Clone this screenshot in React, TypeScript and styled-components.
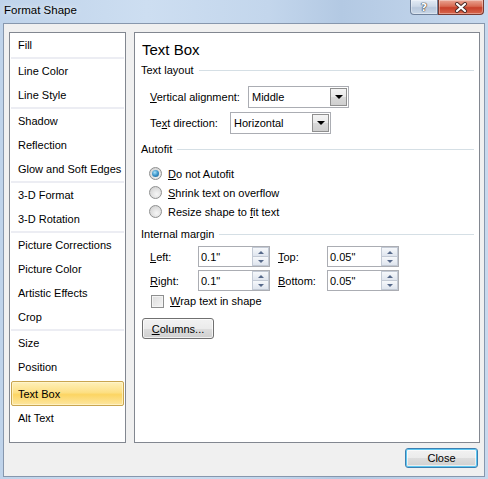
import React from "react";
import styled, { createGlobalStyle } from "styled-components";

const GlobalStyle = createGlobalStyle`
  html, body { margin: 0; padding: 0; }
  body {
    width: 488px;
    height: 479px;
    overflow: hidden;
    font-family: "Liberation Sans", Arial, sans-serif;
    font-size: 11px;
    color: #000;
  }
`;

// window chrome
const Window = styled.div`
  width: 488px;
  height: 479px;
  display: flex;
  flex-direction: column;
  background: linear-gradient(to right, #bfd3ea 0%, #cddef1 30%, #c3d6ec 55%, #b3c9e3 70%, #c7d9ee 100%);
`;

const TitleBar = styled.div`
  height: 23px;
  flex-shrink: 0;
  display: flex;
  align-items: flex-start;
`;

const Title = styled.div`
  flex: 1;
  padding: 3px 0 0 4px;
  font-size: 11.5px;
  line-height: 14px;
  text-shadow: 0 0 6px rgba(255, 255, 255, 0.9);
`;

const CaptionButtons = styled.div`
  display: flex;
  margin-right: 4px;
`;

const CaptionButton = styled.div<{ $close?: boolean }>`
  width: ${(p) => (p.$close ? 46 : 28)}px;
  height: 15px;
  box-sizing: border-box;
  display: flex;
  align-items: center;
  justify-content: center;
  border: 1px solid ${(p) => (p.$close ? "#7b3a30" : "#6f819b")};
  border-top: none;
  border-radius: ${(p) => (p.$close ? "0 0 4px 0" : "0 0 0 4px")};
  background: ${(p) =>
    p.$close
      ? "linear-gradient(#e9a594 0%, #d86a52 45%, #c7402a 55%, #d8674d 100%)"
      : "linear-gradient(#e3ebf5 0%, #ccd8e7 45%, #b8c8dc 55%, #c9d7e8 100%)"};
  box-shadow: inset 0 0 0 1px rgba(255, 255, 255, 0.35);
`;

const HelpGlyph = styled.span`
  font-family: "DejaVu Sans", sans-serif;
  font-weight: bold;
  font-size: 11px;
  line-height: 11px;
  color: #fff;
  text-shadow: 0 0 1px #333, 0 0 1px #333, 0 0 1px #333;
`;

const Client = styled.div`
  flex: 1;
  margin: 0 3px 2px 3px;
  border: 1px solid #8797ad;
  background: #f0f0f0;
  padding: 8px 4px 0 5px;
  display: flex;
  flex-direction: column;
`;

const Body = styled.div`
  height: 411px;
  display: flex;
  gap: 8px;
`;

// left category list
const CategoryList = styled.div`
  width: 117px;
  box-sizing: border-box;
  border: 1px solid #828790;
  background: #fff;
  display: flex;
  flex-direction: column;
`;

const Category = styled.div<{ $selected?: boolean }>`
  height: ${(p) => (p.$selected ? 25 : 24)}px;
  margin-top: ${(p) => (p.$selected ? 2 : 0)}px;
  box-sizing: border-box;
  margin-left: 1px;
  margin-right: 1px;
  padding-left: 6px;
  display: flex;
  align-items: center;
  border: 1px solid ${(p) => (p.$selected ? "#c9a54f" : "transparent")};
  border-radius: 2px;
  background: ${(p) =>
    p.$selected
      ? "linear-gradient(#fef0ba 0%, #fde085 45%, #fcd563 55%, #fde6a0 100%)"
      : "transparent"};
  box-shadow: ${(p) => (p.$selected ? "inset 0 0 0 1px rgba(255,246,210,0.7)" : "none")};
`;

const CategorySep = styled.div`
  height: 2px;
  margin: 0 1px;
  background: #ecedf3;
`;

// right panel
const Panel = styled.div`
  width: 346px;
  box-sizing: border-box;
  border: 1px solid #828790;
  background: #fff;
  padding: 7px 5px 0 6px;
  display: flex;
  flex-direction: column;
`;

const Heading = styled.div`
  height: 20px;
  line-height: 20px;
  margin-left: 1px;
  font-size: 15px;
`;

const SectionHeader = styled.div<{ $mt: number }>`
  height: 16px;
  margin-top: ${(p) => p.$mt}px;
  display: flex;
  align-items: center;
  gap: 5px;
  &::after {
    content: "";
    flex: 1;
    height: 1px;
    background: #d5dfe5;
  }
`;

const FieldRow = styled.div<{ $mt: number }>`
  margin-top: ${(p) => p.$mt}px;
  padding-left: 9px;
  display: flex;
  align-items: center;
`;

const FieldLabel = styled.div<{ $w: number }>`
  width: ${(p) => p.$w}px;
`;

const Combo = styled.div`
  width: 101px;
  height: 22px;
  box-sizing: border-box;
  border: 1px solid #abadb3;
  background: #fff;
  padding: 1px 1px 1px 3px;
  display: flex;
  align-items: center;
  justify-content: space-between;
`;

const ComboArrow = styled.div`
  width: 17px;
  height: 18px;
  box-sizing: border-box;
  border: 1px solid #8f8f8f;
  background: linear-gradient(#f4f4f4 0%, #e9e9e9 50%, #d9d9d9 51%, #cfcfcf 100%);
  display: flex;
  align-items: center;
  justify-content: center;
  &::after {
    content: "";
    border-left: 4px solid transparent;
    border-right: 4px solid transparent;
    border-top: 4px solid #000;
  }
`;

const RadioGroup = styled.div`
  margin-top: 7px;
  padding-left: 8px;
  display: flex;
  flex-direction: column;
`;

const OptionRow = styled.div`
  height: 19px;
  display: flex;
  align-items: center;
  gap: 6px;
`;

const Radio = styled.div<{ $checked?: boolean }>`
  width: 13px;
  height: 13px;
  box-sizing: border-box;
  border-radius: 50%;
  border: 1px solid #8e8f8f;
  background: radial-gradient(circle at 60% 65%, #f6f6f6 0%, #dcdcdc 60%, #c8c8c8 100%);
  display: flex;
  align-items: center;
  justify-content: center;
  &::after {
    content: "";
    display: ${(p) => (p.$checked ? "block" : "none")};
    width: 7px;
    height: 7px;
    border-radius: 50%;
    background: radial-gradient(circle at 40% 35%, #a8e2fb 0%, #3a93c8 50%, #1c5c8c 100%);
  }
`;

const SpinGrid = styled.div<{ $mt: number }>`
  margin-top: ${(p) => p.$mt}px;
  padding-left: 9px;
  display: grid;
  grid-template-columns: 48px 80px 49px 72px;
  align-items: center;
  height: 21px;
`;

const SpinBox = styled.div`
  width: 72px;
  height: 21px;
  box-sizing: border-box;
  border: 1px solid #abadb3;
  background: #fff;
  padding-left: 2px;
  display: flex;
  align-items: center;
  justify-content: space-between;
`;

const SpinButtons = styled.div`
  width: 17px;
  height: 19px;
  display: flex;
  flex-direction: column;
`;

const SpinHalf = styled.div<{ $down?: boolean }>`
  flex: 1;
  box-sizing: border-box;
  border: 1px solid #c3cad5;
  border-top-width: ${(p) => (p.$down ? 0 : 1)}px;
  background: linear-gradient(#f6f8fb, #dfe5ee);
  display: flex;
  align-items: center;
  justify-content: center;
  &::after {
    content: "";
    border-left: 3px solid transparent;
    border-right: 3px solid transparent;
    ${(p) => (p.$down ? "border-top: 3px solid #56698a;" : "border-bottom: 3px solid #56698a;")}
  }
`;

const CheckRow = styled.div`
  margin-top: 3px;
  height: 14px;
  padding-left: 10px;
  display: flex;
  align-items: center;
  gap: 6px;
`;

const CheckBox = styled.div`
  width: 13px;
  height: 13px;
  box-sizing: border-box;
  border: 1px solid #8e8f8f;
  background: linear-gradient(135deg, #dcdcdc 0%, #f4f4f4 100%);
  box-shadow: inset 0 0 0 1px #f4f4f4;
`;

const PushButton = styled.div<{ $default?: boolean }>`
  box-sizing: border-box;
  display: flex;
  align-items: center;
  justify-content: center;
  border: 1px solid ${(p) => (p.$default ? "#3c7fb1" : "#707070")};
  border-radius: 3px;
  background: linear-gradient(#f2f2f2 0%, #ebebeb 50%, #dddddd 51%, #cfcfcf 100%);
  box-shadow: ${(p) =>
    p.$default ? "inset 0 0 0 1px #5ec8f2, inset 0 0 0 2px rgba(255,255,255,0.6)" : "inset 0 0 0 1px rgba(255,255,255,0.7)"};
`;

const ColumnsButton = styled(PushButton)`
  margin-top: 10px;
  margin-left: 1px;
  width: 72px;
  height: 21px;
`;

const Footer = styled.div`
  padding: 5px 2px 0 0;
  display: flex;
  justify-content: flex-end;
`;

const CloseButton = styled(PushButton)`
  width: 73px;
  height: 20px;
`;

type Item = { label: string } | "sep";

const categories: Item[] = [
  { label: "Fill" },
  "sep",
  { label: "Line Color" },
  { label: "Line Style" },
  "sep",
  { label: "Shadow" },
  { label: "Reflection" },
  { label: "Glow and Soft Edges" },
  "sep",
  { label: "3-D Format" },
  { label: "3-D Rotation" },
  "sep",
  { label: "Picture Corrections" },
  { label: "Picture Color" },
  { label: "Artistic Effects" },
  { label: "Crop" },
  "sep",
  { label: "Size" },
  { label: "Position" },
  { label: "Text Box" },
  { label: "Alt Text" },
];

const CloseX = () => (
  <svg width="14" height="11" viewBox="0 0 14 11">
    <path d="M3 2 L11 9 M11 2 L3 9" stroke="#4a2a26" strokeWidth="4" strokeLinecap="round" />
    <path d="M3 2 L11 9 M11 2 L3 9" stroke="#fff" strokeWidth="2.2" strokeLinecap="round" />
  </svg>
);

const App = () => {
  return (
    <>
      <GlobalStyle />
      <Window>
        <TitleBar>
          <Title>Format Shape</Title>
          <CaptionButtons>
            <CaptionButton>
              <HelpGlyph>?</HelpGlyph>
            </CaptionButton>
            <CaptionButton $close>
              <CloseX />
            </CaptionButton>
          </CaptionButtons>
        </TitleBar>

        <Client>
          <Body>
            <CategoryList>
              {categories.map((c, i) =>
                c === "sep" ? (
                  <CategorySep key={i} />
                ) : (
                  <Category key={i} $selected={c.label === "Text Box"}>
                    {c.label}
                  </Category>
                )
              )}
            </CategoryList>

            <Panel>
              <Heading>Text Box</Heading>

              <SectionHeader $mt={2}>Text layout</SectionHeader>
              <FieldRow $mt={8}>
                <FieldLabel $w={98}>
                  <u>V</u>ertical alignment:
                </FieldLabel>
                <Combo>
                  Middle
                  <ComboArrow />
                </Combo>
              </FieldRow>
              <FieldRow $mt={4}>
                <FieldLabel $w={80}>
                  Te<u>x</u>t direction:
                </FieldLabel>
                <Combo>
                  Horizontal
                  <ComboArrow />
                </Combo>
              </FieldRow>

              <SectionHeader $mt={7}>Autofit</SectionHeader>
              <RadioGroup>
                <OptionRow>
                  <Radio $checked />
                  <span>
                    <u>D</u>o not Autofit
                  </span>
                </OptionRow>
                <OptionRow>
                  <Radio />
                  <span>
                    <u>S</u>hrink text on overflow
                  </span>
                </OptionRow>
                <OptionRow>
                  <Radio />
                  <span>
                    Resize shape to <u>f</u>it text
                  </span>
                </OptionRow>
              </RadioGroup>

              <SectionHeader $mt={5}>Internal margin</SectionHeader>
              <SpinGrid $mt={4}>
                <span>
                  <u>L</u>eft:
                </span>
                <SpinBox>
                  0.1"
                  <SpinButtons>
                    <SpinHalf />
                    <SpinHalf $down />
                  </SpinButtons>
                </SpinBox>
                <span>
                  <u>T</u>op:
                </span>
                <SpinBox>
                  0.05"
                  <SpinButtons>
                    <SpinHalf />
                    <SpinHalf $down />
                  </SpinButtons>
                </SpinBox>
              </SpinGrid>
              <SpinGrid $mt={3}>
                <span>
                  <u>R</u>ight:
                </span>
                <SpinBox>
                  0.1"
                  <SpinButtons>
                    <SpinHalf />
                    <SpinHalf $down />
                  </SpinButtons>
                </SpinBox>
                <span>
                  <u>B</u>ottom:
                </span>
                <SpinBox>
                  0.05"
                  <SpinButtons>
                    <SpinHalf />
                    <SpinHalf $down />
                  </SpinButtons>
                </SpinBox>
              </SpinGrid>
              <CheckRow>
                <CheckBox />
                <span>
                  <u>W</u>rap text in shape
                </span>
              </CheckRow>
              <ColumnsButton>
                <span>
                  <u>C</u>olumns...
                </span>
              </ColumnsButton>
            </Panel>
          </Body>
          <Footer>
            <CloseButton $default>Close</CloseButton>
          </Footer>
        </Client>
      </Window>
    </>
  );
};

export default App;
